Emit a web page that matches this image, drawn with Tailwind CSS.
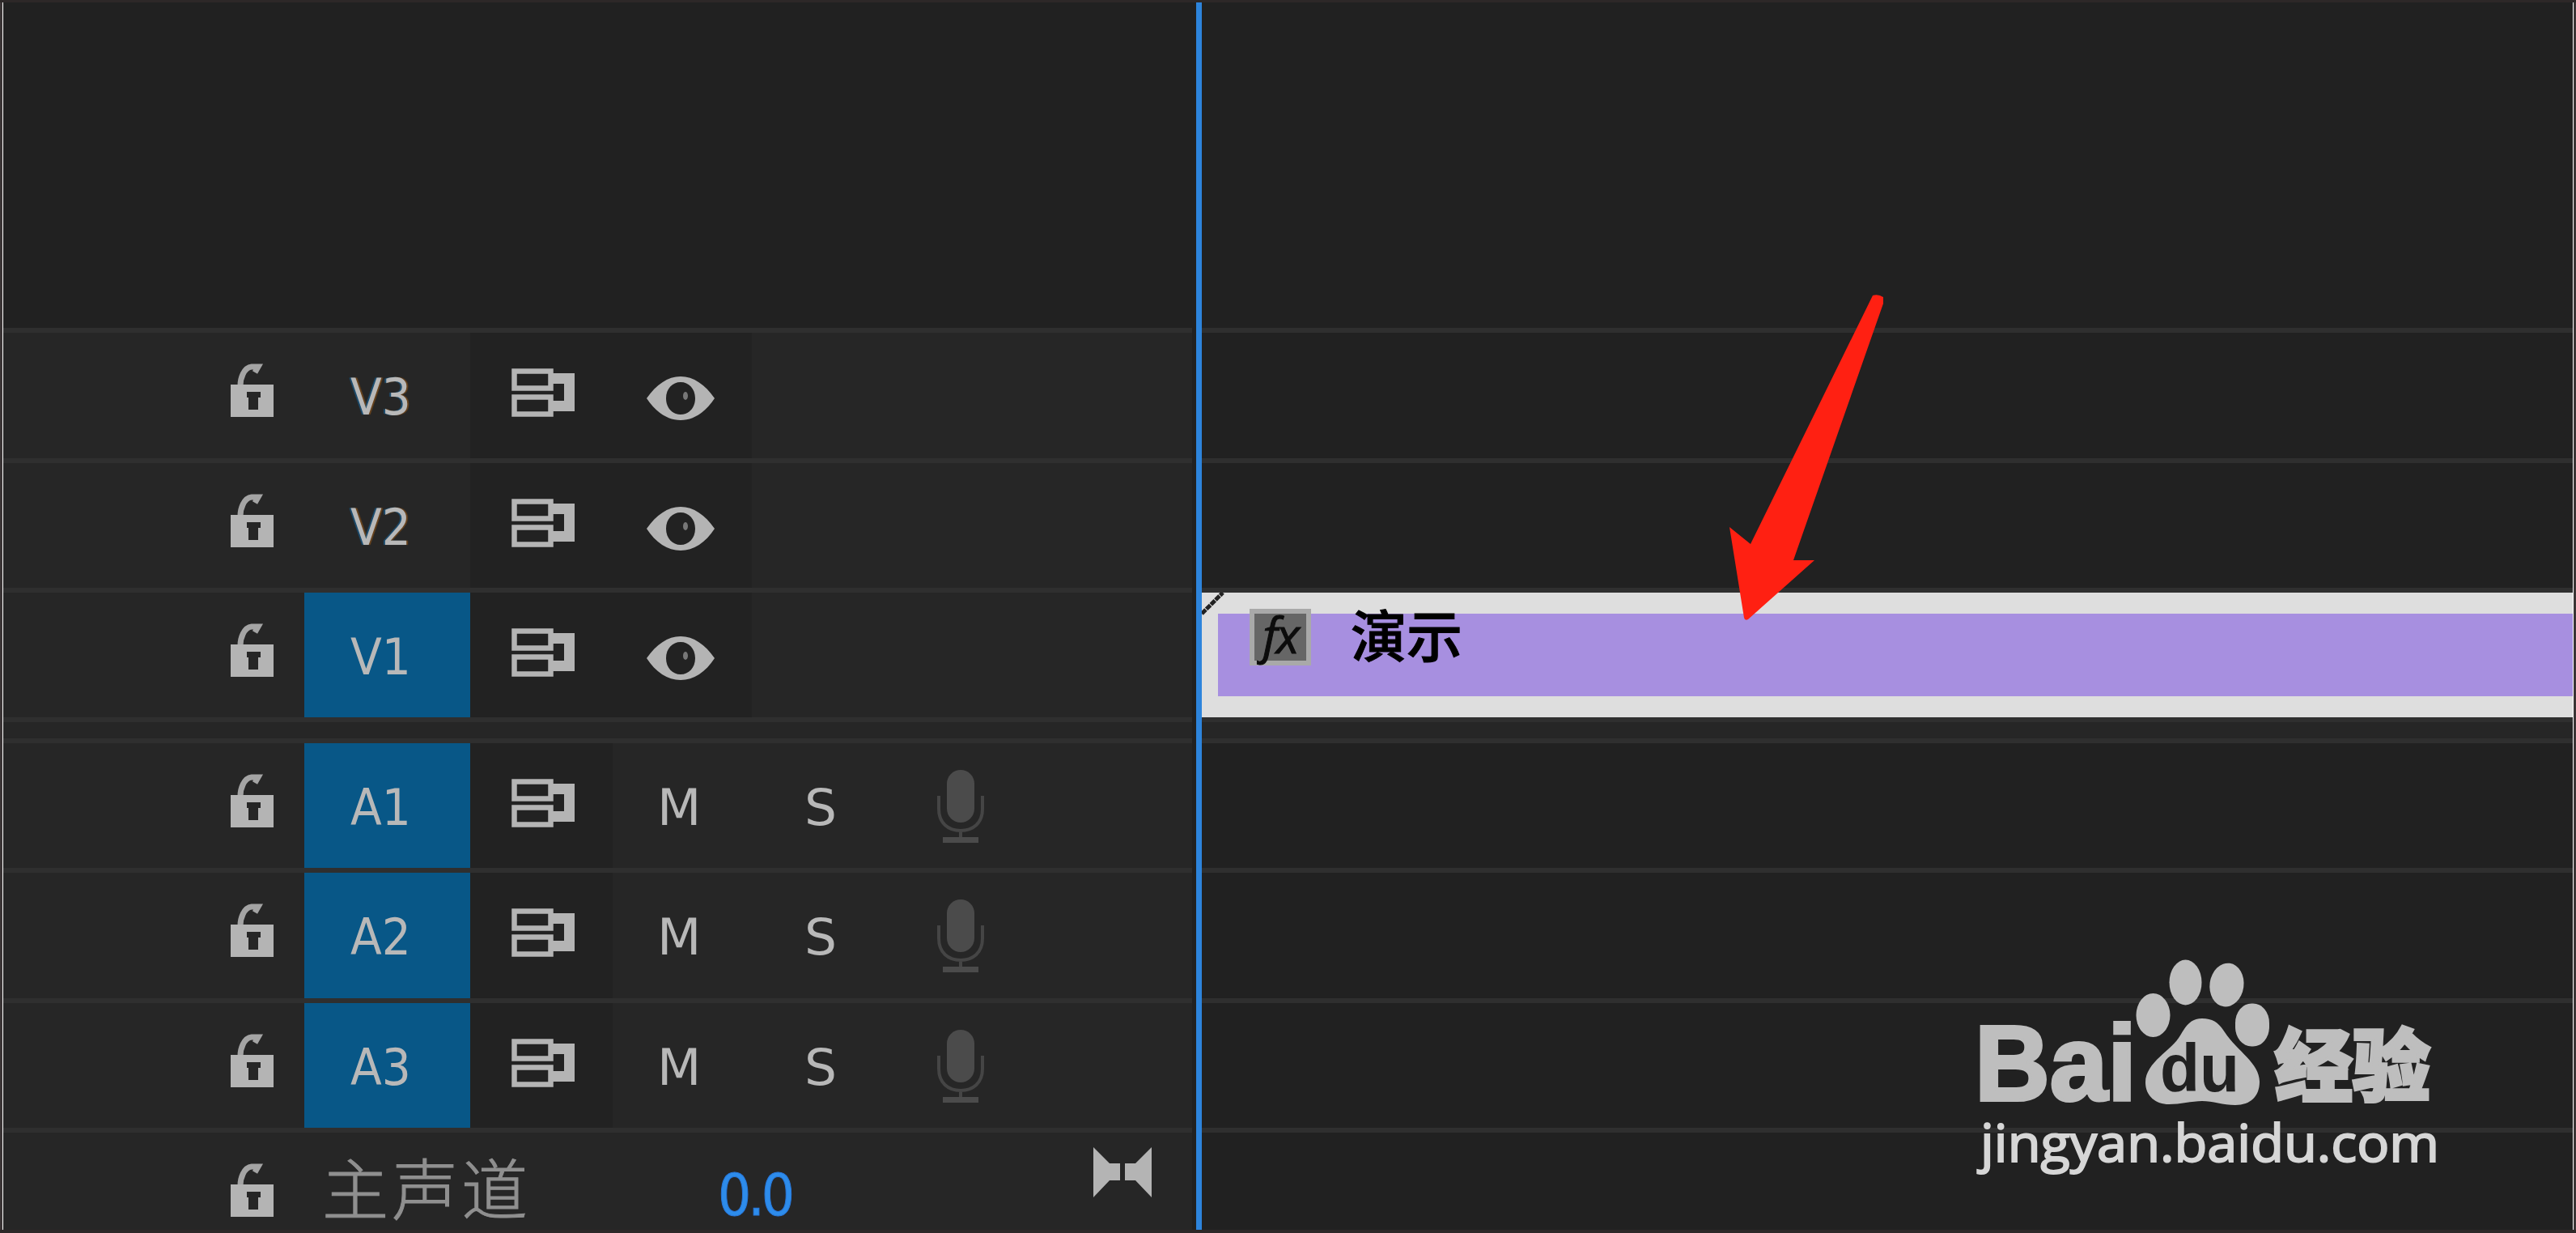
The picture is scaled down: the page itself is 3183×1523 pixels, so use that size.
<!DOCTYPE html>
<html lang="zh">
<head>
    <meta charset="UTF-8">
    <meta name="viewport" content="width=device-width, initial-scale=1.0">
    <title>时间轴</title>
    <script src="https://cdn.jsdelivr.net/npm/@tailwindcss/browser@4"></script>
</head>
<body class="bg-[#212121]">
    <!-- 图标定义 -->
    <svg class="hidden">
        <symbol id="lock" viewBox="0 0 54 66">
            <path d="M12 27C12 19 16 5 26 4h8l-4 7" fill="none" stroke="#a4a4a4" stroke-width="7"/>
            <path d="M0 26h53v40H0zM20 35v7h2v15h12V42h3v-7z" fill="#b4b4b4" fill-rule="evenodd"/>
        </symbol>
        <symbol id="patch" viewBox="0 0 78 60">
            <path d="M3.500 3.500h45v21h-45zM3.500 35.500h45v21h-45z" fill="none" stroke="#b4b4b4" stroke-width="6.500"/>
            <path d="M50 6h28v47H50V40h15V19H50z" fill="#b4b4b4"/>
        </symbol>
        <symbol id="eye" viewBox="0 0 84 60">
            <path d="M0 30C12 13 26 3 42 3s30 10 42 27C73 47 58 57 42 57S11 47 0 30zM42 10c-10 0-18 8-18 20s8 20 18 20 18-8 18-20-8-20-18-20z" fill="#b4b4b4" fill-rule="evenodd"/>
            <ellipse cx="48" cy="27" rx="3" ry="5" fill="#777"/>
        </symbol>
        <symbol id="mic" viewBox="0 0 60 92">
            <rect x="13" y="0" width="34" height="65" rx="17" fill="#4b4b4b"/>
            <path d="M3 32v16c0 18 12 27 27 27s27-9 27-27V32M30 75v10" fill="none" stroke="#454545" stroke-width="4"/>
            <path d="M8 83h44v7H8z" fill="#4b4b4b"/>
        </symbol>
    </svg>

    <div class="relative flex w-[3183px] h-[1523px] overflow-hidden border-t-3 border-b-4 border-[#2d2828] font-['DejaVu_Sans_Condensed','DejaVu_Sans','Noto_Sans_CJK_SC',sans-serif] text-[#b8b8b8]">
        <div class="w-[3px] bg-[#3b3536] shrink-0"></div>
        <div class="w-px bg-white shrink-0"></div>

        <!-- 轨道头 -->
        <div class="w-[1469px] shrink-0 flex flex-col">
            <div class="h-[402px] shrink-0"></div>

            <div class="h-[161px] shrink-0 flex border-t-6 border-[#2f2f2f] bg-[#262626]">
                <div class="w-[372px] pt-[38px] pl-[281px]"><svg class="w-[54px] h-[66px]"><use href="#lock"/></svg></div>
                <div class="w-[205px] pl-[57px] pt-[40px] text-[63px] leading-[80px] [text-shadow:-2px_0_1px_#176aa699,2px_0_1px_#a6601788]">V3</div>
                <div class="w-[348px] flex bg-[#222222]">
                    <svg class="w-[78px] h-[60px] ml-[51px] mt-[44px]"><use href="#patch"/></svg>
                    <svg class="w-[84px] h-[60px] ml-[89px] mt-[51px]"><use href="#eye"/></svg>
                </div>
            </div>

            <div class="h-[160px] shrink-0 flex border-t-6 border-[#2f2f2f] bg-[#262626]">
                <div class="w-[372px] pt-[38px] pl-[281px]"><svg class="w-[54px] h-[66px]"><use href="#lock"/></svg></div>
                <div class="w-[205px] pl-[57px] pt-[40px] text-[63px] leading-[80px] [text-shadow:-2px_0_1px_#176aa699,2px_0_1px_#a6601788]">V2</div>
                <div class="w-[348px] flex bg-[#222222]">
                    <svg class="w-[78px] h-[60px] ml-[51px] mt-[44px]"><use href="#patch"/></svg>
                    <svg class="w-[84px] h-[60px] ml-[89px] mt-[51px]"><use href="#eye"/></svg>
                </div>
            </div>

            <div class="h-[160px] shrink-0 flex border-t-6 border-[#2f2f2f] bg-[#262626]">
                <div class="w-[372px] pt-[38px] pl-[281px]"><svg class="w-[54px] h-[66px]"><use href="#lock"/></svg></div>
                <div class="w-[205px] pl-[57px] pt-[40px] text-[63px] leading-[80px] bg-[#085787]">V1</div>
                <div class="w-[348px] flex bg-[#222222]">
                    <svg class="w-[78px] h-[60px] ml-[51px] mt-[44px]"><use href="#patch"/></svg>
                    <svg class="w-[84px] h-[60px] ml-[89px] mt-[51px]"><use href="#eye"/></svg>
                </div>
            </div>

            <!-- 视频/音频分隔 -->
            <div class="h-[26px] shrink-0 border-t-6 border-[#2f2f2f] bg-[#262626]"></div>

            <div class="h-[160px] shrink-0 flex border-t-6 border-[#2f2f2f] bg-[#262626]">
                <div class="w-[372px] pt-[38px] pl-[281px]"><svg class="w-[54px] h-[66px]"><use href="#lock"/></svg></div>
                <div class="w-[205px] pl-[57px] pt-[40px] text-[63px] leading-[80px] bg-[#085787]">A1</div>
                <div class="w-[176px] bg-[#222222]"><svg class="w-[78px] h-[60px] ml-[51px] mt-[44px]"><use href="#patch"/></svg></div>
                <div class="w-[180px] pl-[55px] pt-[40px] text-[63px] leading-[80px] font-['DejaVu_Sans',sans-serif]">M</div>
                <div class="w-[160px] pl-[57px] pt-[40px] text-[63px] leading-[80px] font-['DejaVu_Sans',sans-serif]">S</div>
                <svg class="w-[60px] h-[92px] ml-[60px] mt-[33px]"><use href="#mic"/></svg>
            </div>

            <div class="h-[161px] shrink-0 flex border-t-6 border-[#2f2f2f] bg-[#262626]">
                <div class="w-[372px] pt-[38px] pl-[281px]"><svg class="w-[54px] h-[66px]"><use href="#lock"/></svg></div>
                <div class="w-[205px] pl-[57px] pt-[40px] text-[63px] leading-[80px] bg-[#085787]">A2</div>
                <div class="w-[176px] bg-[#222222]"><svg class="w-[78px] h-[60px] ml-[51px] mt-[44px]"><use href="#patch"/></svg></div>
                <div class="w-[180px] pl-[55px] pt-[40px] text-[63px] leading-[80px] font-['DejaVu_Sans',sans-serif]">M</div>
                <div class="w-[160px] pl-[57px] pt-[40px] text-[63px] leading-[80px] font-['DejaVu_Sans',sans-serif]">S</div>
                <svg class="w-[60px] h-[92px] ml-[60px] mt-[33px]"><use href="#mic"/></svg>
            </div>

            <div class="h-[160px] shrink-0 flex border-t-6 border-[#2f2f2f] bg-[#262626]">
                <div class="w-[372px] pt-[38px] pl-[281px]"><svg class="w-[54px] h-[66px]"><use href="#lock"/></svg></div>
                <div class="w-[205px] pl-[57px] pt-[40px] text-[63px] leading-[80px] bg-[#085787]">A3</div>
                <div class="w-[176px] bg-[#222222]"><svg class="w-[78px] h-[60px] ml-[51px] mt-[44px]"><use href="#patch"/></svg></div>
                <div class="w-[180px] pl-[55px] pt-[40px] text-[63px] leading-[80px] font-['DejaVu_Sans',sans-serif]">M</div>
                <div class="w-[160px] pl-[57px] pt-[40px] text-[63px] leading-[80px] font-['DejaVu_Sans',sans-serif]">S</div>
                <svg class="w-[60px] h-[92px] ml-[60px] mt-[33px]"><use href="#mic"/></svg>
            </div>

            <!-- 主声道 -->
            <div class="flex-1 min-h-0 flex border-t-6 border-[#2f2f2f] bg-[#262626]">
                <svg class="w-[54px] h-[66px] ml-[281px] mt-[38px] shrink-0"><use href="#lock"/></svg>
                <div class="w-[490px] pl-[59px] pt-[16px] shrink-0 text-[82px] leading-[100px] tracking-[4px] font-light text-[#8f8f8f] font-['Noto_Sans_CJK_SC',sans-serif] [-webkit-text-stroke:1px_#8f8f8f]">主声道</div>
                <div class="w-[522px] pl-[58px] pt-[34px] shrink-0 text-[72px] leading-[86px] tracking-[-4px] text-[#2d8ceb] [-webkit-text-stroke:1px_#2878dc]">0.0</div>
                <svg class="w-[72px] h-[62px] mt-[18px] shrink-0" viewBox="0 0 72 62">
                    <path d="M0 0l20 20h13v21H20L0 62zM72 0L52 20H39v21h13l20 21z" fill="#b4b4b4"/>
                </svg>
            </div>
        </div>

        <!-- 播放指示线 -->
        <div class="w-[5px] bg-[#212121] shrink-0"></div>
        <div class="w-[7px] bg-[#2d84dc] shrink-0"></div>

        <!-- 时间轴内容 -->
        <div class="flex-1 flex flex-col bg-[#212121]">
            <div class="h-[402px] shrink-0"></div>
            <div class="h-[161px] shrink-0 border-t-6 border-[#2f2f2f]"></div>
            <div class="h-[160px] shrink-0 border-t-6 border-[#2f2f2f]"></div>
            <div class="h-[160px] shrink-0 border-t-6 border-[#2f2f2f]">
                <div class="relative h-[154px] bg-[#dedede] pt-[26px] pl-[20px]">
                    <div class="h-[102px] bg-[#a78fe0]"></div>
                    <svg class="absolute left-0 top-0 w-[30px] h-[28px]"><path d="M0 26L26 0" stroke="#222" stroke-width="5" stroke-dasharray="7 1"/></svg>
                    <div class="absolute left-[59px] top-[20px] flex items-start">
                        <div class="w-[76px] h-[70px] border-6 border-[#a9a9a9] bg-[#666666] text-[#0c0c0c] text-[60px] leading-[52px] text-center italic tracking-[-2px] font-['Open_Sans','Noto_Sans',sans-serif] [-webkit-text-stroke:1px_#0c0c0c]">fx</div>
                        <span class="ml-[49px] -mt-[5px] text-[69px] leading-[70px] font-medium text-black font-['Noto_Sans_CJK_SC',sans-serif] [-webkit-text-stroke:1px_#000]">演示</span>
                    </div>
                </div>
            </div>
            <div class="h-[26px] shrink-0 border-t-6 border-[#2f2f2f] bg-[#262626]"></div>
            <div class="h-[160px] shrink-0 border-t-6 border-[#2f2f2f]"></div>
            <div class="h-[161px] shrink-0 border-t-6 border-[#2f2f2f]"></div>
            <div class="h-[160px] shrink-0 border-t-6 border-[#2f2f2f]"></div>
            <div class="flex-1 border-t-6 border-[#2f2f2f]"></div>
        </div>
        <div class="w-px bg-white shrink-0"></div>
        <div class="w-[3px] bg-[#3b3536] shrink-0"></div>

        <!-- 红色箭头 -->
        <svg class="absolute left-[2130px] top-[357px] w-[200px] h-[420px]" viewBox="2130 360 200 420">
            <path d="M2314 365q7-2 13 2v8L2216 692l26 0L2160 765q-4 2-5-2L2137 651l26 21z" fill="#ff2012"/>
        </svg>

        <!-- 水印 -->
        <svg class="absolute left-[2400px] top-[1157px] w-[660px] h-[320px]" viewBox="2400 1160 660 320">
            <g fill="#bebebe">
                <text x="2440" y="1359" font-family="Liberation Sans, sans-serif" font-weight="700" font-size="131" stroke="#bebebe" stroke-width="4" textLength="200" lengthAdjust="spacingAndGlyphs">Bai</text>
                <ellipse cx="2660.500" cy="1254" rx="21" ry="27"/>
                <ellipse cx="2700.500" cy="1213.500" rx="20" ry="28"/>
                <ellipse cx="2751.500" cy="1216.500" rx="21" ry="27" transform="rotate(8 2751 1216)"/>
                <rect x="2762" y="1239.500" width="42" height="53" rx="20" ry="24"/>
                <path d="M2721 1258c-14 0-20 9-27 21-10 18-43 33-43 58 0 17 13 27 29 27 14 0 28-4 41-4s26 5 41 5c19 0 30-11 30-29 0-23-28-38-43-61-7-11-14-17-28-17z"/>
                <text x="2811" y="1352" font-family="Noto Sans CJK SC, sans-serif" font-weight="900" font-size="97" stroke="#bebebe" stroke-width="4" textLength="192" lengthAdjust="spacingAndGlyphs">经验</text>
            </g>
            <text x="2669" y="1348" font-family="Liberation Sans, sans-serif" font-weight="700" font-size="83" fill="#212121" textLength="98" lengthAdjust="spacingAndGlyphs">du</text>
            <text x="2447" y="1435" font-family="Open Sans, Noto Sans, sans-serif" font-weight="500" font-size="64" fill="#d6d6d6" stroke="#d6d6d6" stroke-width="2" textLength="567" lengthAdjust="spacingAndGlyphs">jingyan.baidu.com</text>
        </svg>
    </div>
</body>
</html>
